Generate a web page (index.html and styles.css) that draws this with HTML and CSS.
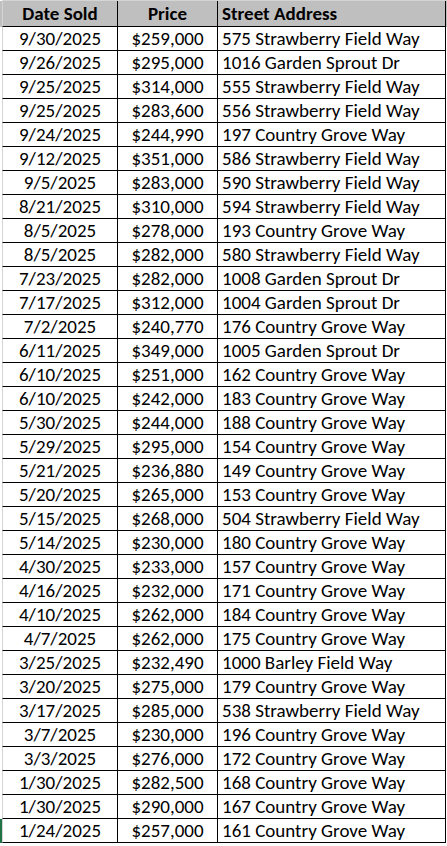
FILE: index.html
```html
<!DOCTYPE html>
<html>
<head>
<meta charset="utf-8">
<link rel="stylesheet" href="styles.css">
</head>
<body>
<div class="sheet">
  <div class="row head">
    <div class="cell c1">Date Sold</div>
    <div class="cell c2">Price</div>
    <div class="cell c3">Street Address</div>
  </div>
  <div class="row"><div class="cell c1">9/30/2025</div><div class="cell c2">$259,000</div><div class="cell c3">575 Strawberry Field Way</div></div>
  <div class="row"><div class="cell c1">9/26/2025</div><div class="cell c2">$295,000</div><div class="cell c3">1016 Garden Sprout Dr</div></div>
  <div class="row"><div class="cell c1">9/25/2025</div><div class="cell c2">$314,000</div><div class="cell c3">555 Strawberry Field Way</div></div>
  <div class="row"><div class="cell c1">9/25/2025</div><div class="cell c2">$283,600</div><div class="cell c3">556 Strawberry Field Way</div></div>
  <div class="row"><div class="cell c1">9/24/2025</div><div class="cell c2">$244,990</div><div class="cell c3">197 Country Grove Way</div></div>
  <div class="row"><div class="cell c1">9/12/2025</div><div class="cell c2">$351,000</div><div class="cell c3">586 Strawberry Field Way</div></div>
  <div class="row"><div class="cell c1">9/5/2025</div><div class="cell c2">$283,000</div><div class="cell c3">590 Strawberry Field Way</div></div>
  <div class="row"><div class="cell c1">8/21/2025</div><div class="cell c2">$310,000</div><div class="cell c3">594 Strawberry Field Way</div></div>
  <div class="row"><div class="cell c1">8/5/2025</div><div class="cell c2">$278,000</div><div class="cell c3">193 Country Grove Way</div></div>
  <div class="row"><div class="cell c1">8/5/2025</div><div class="cell c2">$282,000</div><div class="cell c3">580 Strawberry Field Way</div></div>
  <div class="row"><div class="cell c1">7/23/2025</div><div class="cell c2">$282,000</div><div class="cell c3">1008 Garden Sprout Dr</div></div>
  <div class="row"><div class="cell c1">7/17/2025</div><div class="cell c2">$312,000</div><div class="cell c3">1004 Garden Sprout Dr</div></div>
  <div class="row"><div class="cell c1">7/2/2025</div><div class="cell c2">$240,770</div><div class="cell c3">176 Country Grove Way</div></div>
  <div class="row"><div class="cell c1">6/11/2025</div><div class="cell c2">$349,000</div><div class="cell c3">1005 Garden Sprout Dr</div></div>
  <div class="row"><div class="cell c1">6/10/2025</div><div class="cell c2">$251,000</div><div class="cell c3">162 Country Grove Way</div></div>
  <div class="row"><div class="cell c1">6/10/2025</div><div class="cell c2">$242,000</div><div class="cell c3">183 Country Grove Way</div></div>
  <div class="row"><div class="cell c1">5/30/2025</div><div class="cell c2">$244,000</div><div class="cell c3">188 Country Grove Way</div></div>
  <div class="row"><div class="cell c1">5/29/2025</div><div class="cell c2">$295,000</div><div class="cell c3">154 Country Grove Way</div></div>
  <div class="row"><div class="cell c1">5/21/2025</div><div class="cell c2">$236,880</div><div class="cell c3">149 Country Grove Way</div></div>
  <div class="row"><div class="cell c1">5/20/2025</div><div class="cell c2">$265,000</div><div class="cell c3">153 Country Grove Way</div></div>
  <div class="row"><div class="cell c1">5/15/2025</div><div class="cell c2">$268,000</div><div class="cell c3">504 Strawberry Field Way</div></div>
  <div class="row"><div class="cell c1">5/14/2025</div><div class="cell c2">$230,000</div><div class="cell c3">180 Country Grove Way</div></div>
  <div class="row"><div class="cell c1">4/30/2025</div><div class="cell c2">$233,000</div><div class="cell c3">157 Country Grove Way</div></div>
  <div class="row"><div class="cell c1">4/16/2025</div><div class="cell c2">$232,000</div><div class="cell c3">171 Country Grove Way</div></div>
  <div class="row"><div class="cell c1">4/10/2025</div><div class="cell c2">$262,000</div><div class="cell c3">184 Country Grove Way</div></div>
  <div class="row"><div class="cell c1">4/7/2025</div><div class="cell c2">$262,000</div><div class="cell c3">175 Country Grove Way</div></div>
  <div class="row"><div class="cell c1">3/25/2025</div><div class="cell c2">$232,490</div><div class="cell c3">1000 Barley Field Way</div></div>
  <div class="row"><div class="cell c1">3/20/2025</div><div class="cell c2">$275,000</div><div class="cell c3">179 Country Grove Way</div></div>
  <div class="row"><div class="cell c1">3/17/2025</div><div class="cell c2">$285,000</div><div class="cell c3">538 Strawberry Field Way</div></div>
  <div class="row"><div class="cell c1">3/7/2025</div><div class="cell c2">$230,000</div><div class="cell c3">196 Country Grove Way</div></div>
  <div class="row"><div class="cell c1">3/3/2025</div><div class="cell c2">$276,000</div><div class="cell c3">172 Country Grove Way</div></div>
  <div class="row"><div class="cell c1">1/30/2025</div><div class="cell c2">$282,500</div><div class="cell c3">168 Country Grove Way</div></div>
  <div class="row"><div class="cell c1">1/30/2025</div><div class="cell c2">$290,000</div><div class="cell c3">167 Country Grove Way</div></div>
  <div class="row last"><div class="cell c1">1/24/2025</div><div class="cell c2">$257,000</div><div class="cell c3">161 Country Grove Way</div></div>
</div>
</body>
</html>
```

FILE: styles.css
```css
html, body {
  margin: 0;
  padding: 0;
  background: #ffffff;
}

body {
  width: 447px;
  font-family: Calibri, Carlito, Lato, "Liberation Sans", sans-serif;
  color: #000000;
}

.sheet {
  margin-left: 2px;
  width: 445px;
  border-top: 1px solid #d4d4d4;
  display: flex;
  flex-direction: column;
}

.row {
  display: grid;
  grid-template-columns: 116px 100px 228px;
  height: 24px;
}

.row.head {
  height: 26px;
  background: #bfbfbf;
}

.cell {
  box-sizing: border-box;
  border-right: 1px solid #000;
  border-bottom: 1px solid #000;
  font-size: 19px;
  line-height: 24px;
  white-space: nowrap;
  overflow: hidden;
}

.c1 {
  border-left: 1px solid #d4d4d4;
  text-align: center;
}

.c2 {
  text-align: center;
}

.c3 {
  padding-left: 4px;
}

.head .cell {
  font-weight: bold;
  font-size: 19px;
  line-height: 26px;
}

.head .c1 {
  box-shadow: -2px 0 0 #bfbfbf;
}

.last .c1 {
  box-shadow: -2px 0 0 #217346;
}
```
